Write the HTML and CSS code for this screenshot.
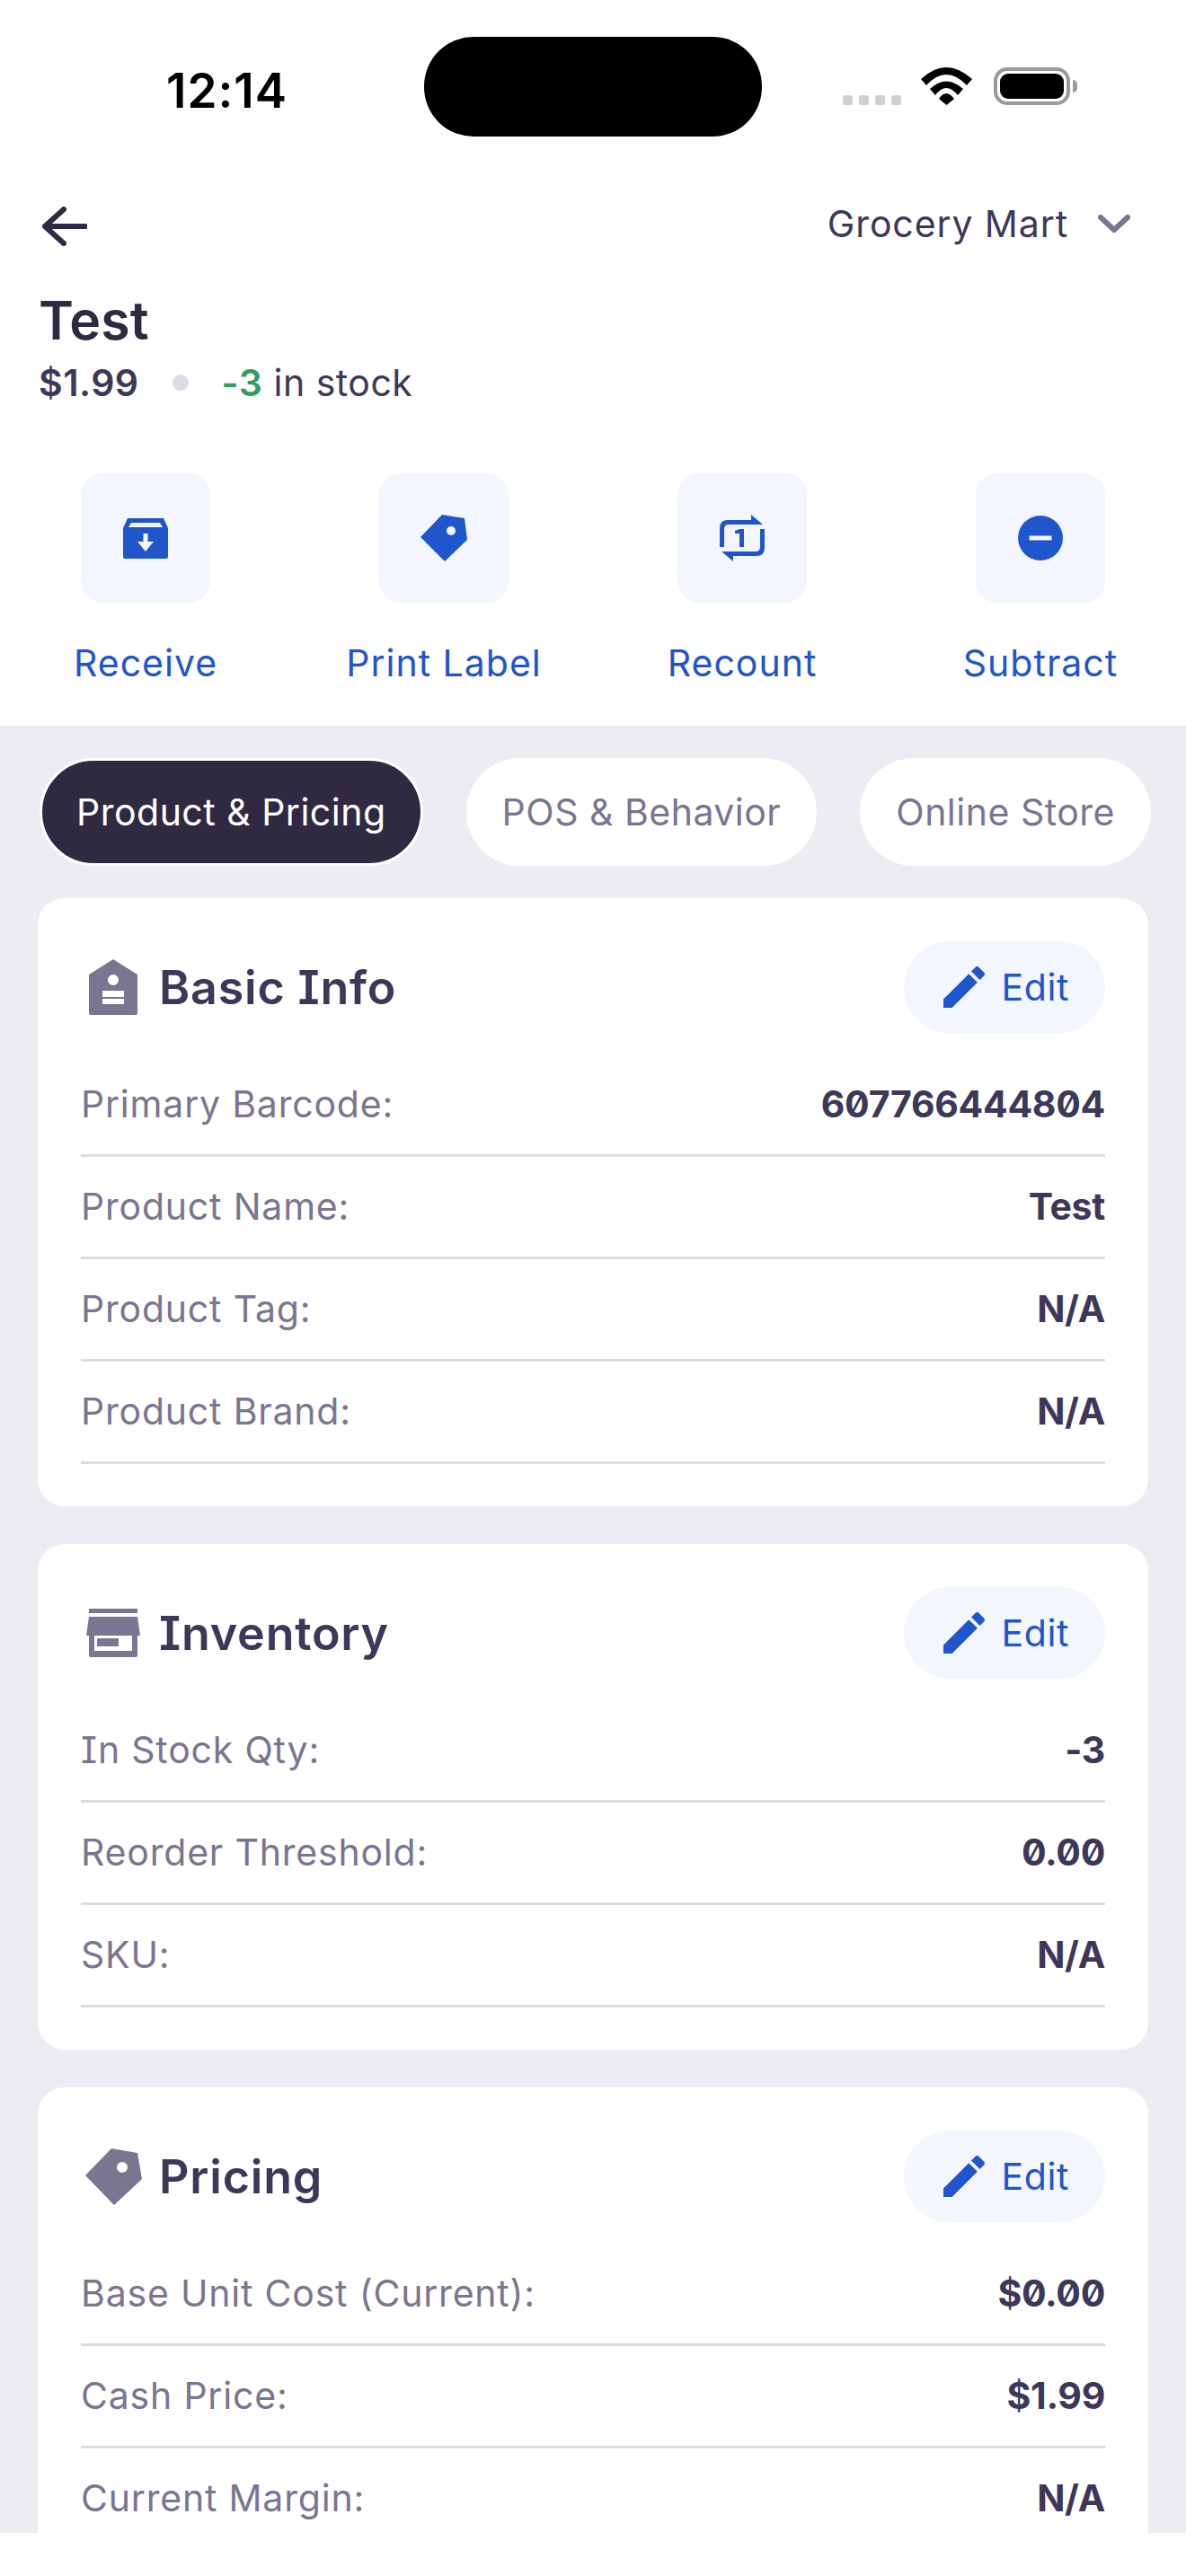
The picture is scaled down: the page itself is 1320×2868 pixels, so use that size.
FILE: index.html
```html
<!DOCTYPE html>
<html lang="en">
<head>
    <meta charset="UTF-8">
    <meta name="viewport" content="width=device-width, initial-scale=1.0">
    <title>Test</title>
    <link rel="stylesheet" href="styles.css">
</head>
<body>
    <div class="status-bar">
        <div class="status-time">12:14</div>
        <div class="status-island"></div>
        <div class="status-icons">
            <div class="signal-dots"><span></span><span></span><span></span><span></span></div>
            <svg class="wifi-icon" width="57" height="42" viewBox="0 0 57 42">
                <path d="M0 13Q28-13 57 13L51 20Q28-4 6 20Z"/>
                <path d="M10 24Q28 7 47 24L41 31Q28 15 16 31Z"/>
                <path d="M20 35Q28 23 37 35L28.5 42Z"/>
            </svg>
            <div class="battery"><div class="battery-fill"></div></div>
            <div class="battery-nub"></div>
        </div>
    </div>

    <div class="top-section">
        <div class="nav-row">
            <svg class="back-icon" width="50" height="44" viewBox="0 0 50 44">
                <path d="M24 3L3 22L24 41M3 22H48"/>
            </svg>
            <div class="store-select">
                <span>Grocery Mart</span>
                <svg class="chevron-icon" width="36" height="20" viewBox="0 0 36 20">
                    <path d="M3 3L18 17L33 3"/>
                </svg>
            </div>
        </div>

        <h1 class="product-title">Test</h1>
        <div class="product-meta">
            <span class="product-price">$1.99</span>
            <span class="meta-dot"></span>
            <span class="stock-text"><b>-3</b> in stock</span>
        </div>

        <div class="actions">
            <div class="action">
                <div class="action-tile">
                    <svg width="50" height="45" viewBox="0 0 50 45">
                        <path fill-rule="evenodd" d="M5 0H45L50 11V43Q50 45 48 45H2Q0 45 0 43V11ZM9 5L6 10H44L41 5ZM22.500 17V26H16L25 37L34 26H27.500V17Z"/>
                    </svg>
                </div>
                <div class="action-label">Receive</div>
            </div>
            <div class="action">
                <div class="action-tile">
                    <svg width="52" height="52" viewBox="0 0 52 52">
                        <path fill-rule="evenodd" d="M24 0L49 4L52 28L27 52L0 25ZM34 13A5 5 0 1 0 34 23A5 5 0 1 0 34 13Z"/>
                    </svg>
                </div>
                <div class="action-label">Print Label</div>
            </div>
            <div class="action">
                <div class="action-tile">
                    <svg width="50" height="52" viewBox="0 0 50 52">
                        <path d="M35 0L48 11H10Q5 11 5 16V36H0V15Q0 6 9 6H35Z"/>
                        <path d="M15 52L2 41H40Q45 41 45 36V16H50V37Q50 46 41 46H15Z"/>
                        <path d="M22 16H27V36H22V21H17V18Z"/>
                    </svg>
                </div>
                <div class="action-label">Recount</div>
            </div>
            <div class="action">
                <div class="action-tile">
                    <svg width="50" height="50" viewBox="0 0 50 50">
                        <path fill-rule="evenodd" d="M25 0A25 25 0 1 0 25 50A25 25 0 1 0 25 0ZM12.500 22.500H37.500V27.500H12.500Z"/>
                    </svg>
                </div>
                <div class="action-label">Subtract</div>
            </div>
        </div>
    </div>

    <div class="content">
        <div class="tabs">
            <div class="tab tab-active">Product &amp; Pricing</div>
            <div class="tab">POS &amp; Behavior</div>
            <div class="tab">Online Store</div>
        </div>

        <div class="card">
            <div class="card-header">
                <div class="card-icon">
                    <svg width="54" height="62" viewBox="0 0 54 62">
                        <path fill-rule="evenodd" d="M27 0L54 17V60Q54 62 52 62H2Q0 62 0 60V17ZM27 17A6 6 0 1 0 27 29A6 6 0 1 0 27 17ZM15 35V42H39V35ZM15 44V50H39V44Z"/>
                    </svg>
                </div>
                <h2 class="card-title">Basic Info</h2>
                <div class="edit-btn">
                    <svg width="46" height="46" viewBox="3 3 18 18"><path d="M3 17.250V21h3.750L17.810 9.940l-3.750-3.750L3 17.250zM20.710 7.040c.39-.39.39-1.020 0-1.410l-2.340-2.340c-.39-.39-1.020-.39-1.410 0l-1.830 1.830 3.750 3.750 1.830-1.830z"/></svg>
                    <span>Edit</span>
                </div>
            </div>
            <div class="row"><span class="row-label">Primary Barcode:</span><span class="row-value">607766444804</span></div>
            <div class="row"><span class="row-label">Product Name:</span><span class="row-value">Test</span></div>
            <div class="row"><span class="row-label">Product Tag:</span><span class="row-value">N/A</span></div>
            <div class="row"><span class="row-label">Product Brand:</span><span class="row-value">N/A</span></div>
        </div>

        <div class="card">
            <div class="card-header">
                <div class="card-icon">
                    <svg width="60" height="54" viewBox="0 0 60 54">
                        <path fill-rule="evenodd" d="M3 0H57V5H3ZM3 9H57L60 30H57V52Q57 54 55 54H5Q3 54 3 52V30H0ZM9 30V47H51V30ZM12 33H36V42H12Z"/>
                    </svg>
                </div>
                <h2 class="card-title">Inventory</h2>
                <div class="edit-btn">
                    <svg width="46" height="46" viewBox="3 3 18 18"><path d="M3 17.250V21h3.750L17.810 9.940l-3.750-3.750L3 17.250zM20.710 7.040c.39-.39.39-1.020 0-1.410l-2.340-2.340c-.39-.39-1.020-.39-1.410 0l-1.830 1.830 3.750 3.750 1.830-1.830z"/></svg>
                    <span>Edit</span>
                </div>
            </div>
            <div class="row"><span class="row-label">In Stock Qty:</span><span class="row-value">-3</span></div>
            <div class="row"><span class="row-label">Reorder Threshold:</span><span class="row-value">0.00</span></div>
            <div class="row"><span class="row-label">SKU:</span><span class="row-value">N/A</span></div>
        </div>

        <div class="card">
            <div class="card-header">
                <div class="card-icon">
                    <svg width="63" height="63" viewBox="0 0 63 63">
                        <path fill-rule="evenodd" d="M29 0L58 5L63 34L32 63L0 30ZM41 15A6 6 0 1 0 41 27A6 6 0 1 0 41 15Z"/>
                    </svg>
                </div>
                <h2 class="card-title">Pricing</h2>
                <div class="edit-btn">
                    <svg width="46" height="46" viewBox="3 3 18 18"><path d="M3 17.250V21h3.750L17.810 9.940l-3.750-3.750L3 17.250zM20.710 7.040c.39-.39.39-1.020 0-1.410l-2.340-2.340c-.39-.39-1.020-.39-1.410 0l-1.830 1.830 3.750 3.750 1.830-1.830z"/></svg>
                    <span>Edit</span>
                </div>
            </div>
            <div class="row"><span class="row-label">Base Unit Cost (Current):</span><span class="row-value">$0.00</span></div>
            <div class="row"><span class="row-label">Cash Price:</span><span class="row-value">$1.99</span></div>
            <div class="row"><span class="row-label">Current Margin:</span><span class="row-value">N/A</span></div>
        </div>
    </div>
</body>
</html>
```

FILE: styles.css
```css
* {
    box-sizing: border-box;
}
body {
    font-family: Inter, "Liberation Sans", sans-serif;
    font-size: 41px;
    letter-spacing: 1px;
    font-feature-settings: "cv08";
    margin: 0;
    background-color: #fff;
    color: #3d3859;
}

/* status bar */
.status-bar {
    display: flex;
    height: 152px;
    padding-top: 41px;
}
.status-time {
    width: 472px;
    padding: 29px 0 0 185px;
    font-size: 53px;
    line-height: 62px;
    font-weight: 600;
    letter-spacing: 1px;
    color: #000;
}
.status-island {
    width: 376px;
    height: 111px;
    border-radius: 55px;
    background-color: #000;
}
.status-icons {
    display: flex;
    align-items: flex-end;
    height: 76px;
    margin-left: 90px;
}
.signal-dots {
    display: flex;
    gap: 7px;
    margin-right: 22px;
}
.signal-dots span {
    width: 11px;
    height: 11px;
    border-radius: 3px;
    background-color: #cfcfcf;
}
.wifi-icon {
    fill: #000;
    margin-right: 24px;
}
.battery {
    width: 85px;
    height: 42px;
    padding: 3px;
    border: 4px solid #999;
    border-radius: 15px;
}
.battery-fill {
    width: 100%;
    height: 100%;
    border-radius: 9px;
    background-color: #000;
}
.battery-nub {
    width: 5px;
    height: 14px;
    margin: 0 0 14px 3px;
    border-radius: 0 5px 5px 0;
    background-color: #999;
}

/* product header */
.top-section {
    height: 656px;
    padding: 78px 0 0;
}
.nav-row {
    display: flex;
    justify-content: space-between;
    align-items: center;
    height: 44px;
    padding: 0 62px 0 47px;
}
.back-icon path {
    fill: none;
    stroke: #2f2a42;
    stroke-width: 6;
    stroke-linecap: round;
    stroke-linejoin: round;
}
.store-select {
    display: flex;
    align-items: center;
    gap: 33px;
    margin-top: -6px;
    letter-spacing: 0.9px;
}
.chevron-icon path {
    fill: none;
    stroke: #7a7590;
    stroke-width: 6;
    stroke-linecap: round;
    stroke-linejoin: round;
}
.product-title {
    margin: 47px 0 0 43px;
    font-size: 59px;
    line-height: 72px;
    font-weight: 600;
    letter-spacing: 0;
    color: #2f2a42;
}
.product-meta {
    display: flex;
    align-items: center;
    height: 50px;
    margin: 8px 0 0 43px;
}
.product-price {
    font-weight: 600;
    letter-spacing: 0.5px;
    color: #3d3859;
}
.meta-dot {
    width: 18px;
    height: 18px;
    margin: 0 37px;
    border-radius: 50%;
    background-color: #dddce6;
}
.stock-text {
    letter-spacing: 0.5px;
}
.stock-text b {
    font-weight: 600;
    color: #2e9e5e;
}
.actions {
    display: grid;
    grid-template-columns: repeat(4, 144px);
    justify-content: space-between;
    margin-top: 76px;
    padding: 0 90px;
}
.action {
    display: flex;
    flex-direction: column;
    align-items: center;
}
.action-tile {
    display: flex;
    justify-content: center;
    align-items: center;
    width: 144px;
    height: 144px;
    border-radius: 24px;
    background-color: #f3f6fe;
}
.action-tile svg {
    fill: #2055cc;
}
.action-label {
    margin-top: 42px;
    line-height: 50px;
    white-space: nowrap;
    color: #2055cc;
}

/* tabs and cards */
.content {
    height: 2012px;
    overflow: hidden;
    padding: 36px 42px 0;
    background-color: #ecedf2;
}
.tabs {
    display: flex;
    gap: 48px;
    padding-left: 2px;
    margin-bottom: 36px;
}
.tab {
    display: flex;
    align-items: center;
    height: 120px;
    padding: 0 40px;
    border-radius: 60px;
    background-color: #fff;
    color: #7a7590;
    letter-spacing: 0.5px;
    white-space: nowrap;
}
.tab-active {
    padding: 0 38px;
    border: 3px solid #fff;
    background-color: #2f2a42;
    color: #fff;
}
.card {
    margin-bottom: 42px;
    padding: 48px 48px 47px;
    border-radius: 30px;
    background-color: #fff;
}
.card-header {
    display: flex;
    align-items: center;
    height: 102px;
    margin-bottom: 24px;
}
.card-icon {
    display: flex;
    justify-content: center;
    width: 72px;
    margin-right: 15px;
    fill: #7a7590;
}
.card-title {
    flex-grow: 1;
    margin: 0;
    font-size: 52px;
    font-weight: 600;
    letter-spacing: 0.8px;
    color: #3d3859;
}
.edit-btn {
    display: flex;
    align-items: center;
    gap: 19px;
    height: 102px;
    padding: 0 40px 0 44px;
    border-radius: 51px;
    background-color: #f3f6fe;
    color: #2055cc;
    letter-spacing: 0.6px;
}
.edit-btn svg {
    fill: #2055cc;
}
.row {
    display: flex;
    justify-content: space-between;
    height: 114px;
    padding-top: 28px;
    line-height: 55px;
    border-bottom: 3px solid #dddce6;
}
.row-label {
    letter-spacing: 0.8px;
    color: #7a7590;
}
.row-value {
    font-weight: 700;
    letter-spacing: -0.3px;
    font-feature-settings: "cv08", "zero";
    color: #3d3859;
}
```
